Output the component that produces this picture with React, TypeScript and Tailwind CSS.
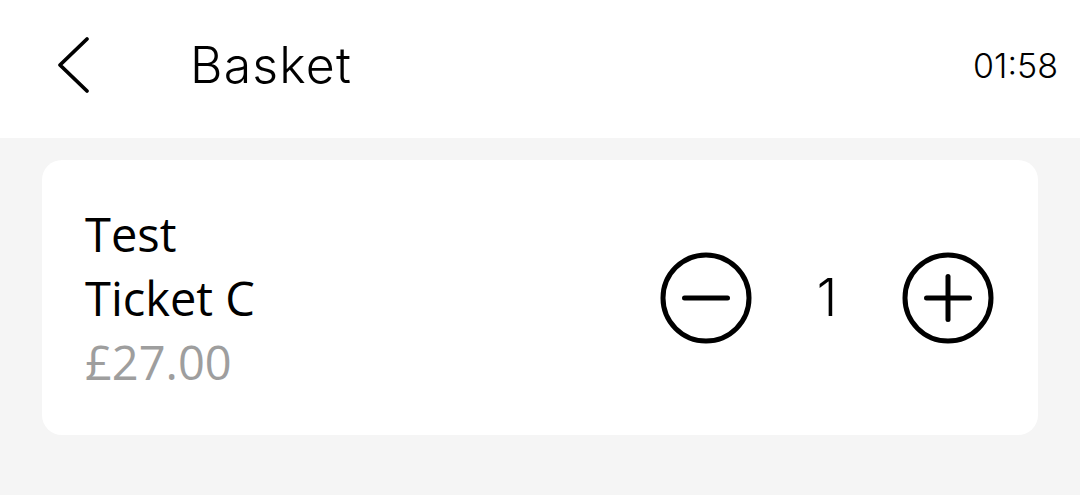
import React, { useState } from "react";

function CircleIcon({ plus }: { plus?: boolean }) {
  return (
    <svg width="96" height="96" viewBox="0 0 96 96" fill="none" stroke="#000" strokeWidth="5" strokeLinecap="round">
      <circle cx="48" cy="48" r="43" />
      <line x1="26.5" y1="48" x2="69.5" y2="48" />
      {plus && <line x1="48" y1="26.5" x2="48" y2="69.5" />}
    </svg>
  );
}

export default function App() {
  const [qty, setQty] = useState(1);

  return (
    <div className="min-h-screen w-full bg-[#f5f5f5]">
      {/* Header */}
      <div className="h-[138px] bg-white flex items-center pl-[56px] pr-[22px] pb-[8px]">
        <button className="w-[36px] h-[58px] flex items-center justify-center">
          <svg width="36" height="58" viewBox="0 0 36 58" fill="none" stroke="#000" strokeWidth="3.8" strokeLinecap="round" strokeLinejoin="round">
            <path d="M31 3 L4 29 L31 55" />
          </svg>
        </button>
        <h1 className="ml-[98px] text-[50px] font-light text-black tracking-[1.2px] font-['Inter',sans-serif]">Basket</h1>
        <div className="ml-auto text-[34px] font-light text-black font-['Inter',sans-serif]">01:58</div>
      </div>

      {/* Items */}
      <div className="px-[42px] pt-[22px]">
        <div className="bg-white rounded-[20px] h-[275px] flex items-center pl-[43px] pr-[42px]">
          <div className="flex flex-col text-[47px] leading-[64px] font-['Open_Sans',sans-serif]">
            <span className="text-black">Test</span>
            <span className="text-black">Ticket C</span>
            <span className="text-[#9e9e9e]">£27.00</span>
          </div>
          <div className="ml-auto flex items-center">
            <button onClick={() => setQty((q) => Math.max(0, q - 1))}>
              <CircleIcon />
            </button>
            <span className="w-[146px] text-center text-[52px] font-light text-black font-['Inter',sans-serif]">{qty}</span>
            <button onClick={() => setQty((q) => q + 1)}>
              <CircleIcon plus />
            </button>
          </div>
        </div>
      </div>
    </div>
  );
}
